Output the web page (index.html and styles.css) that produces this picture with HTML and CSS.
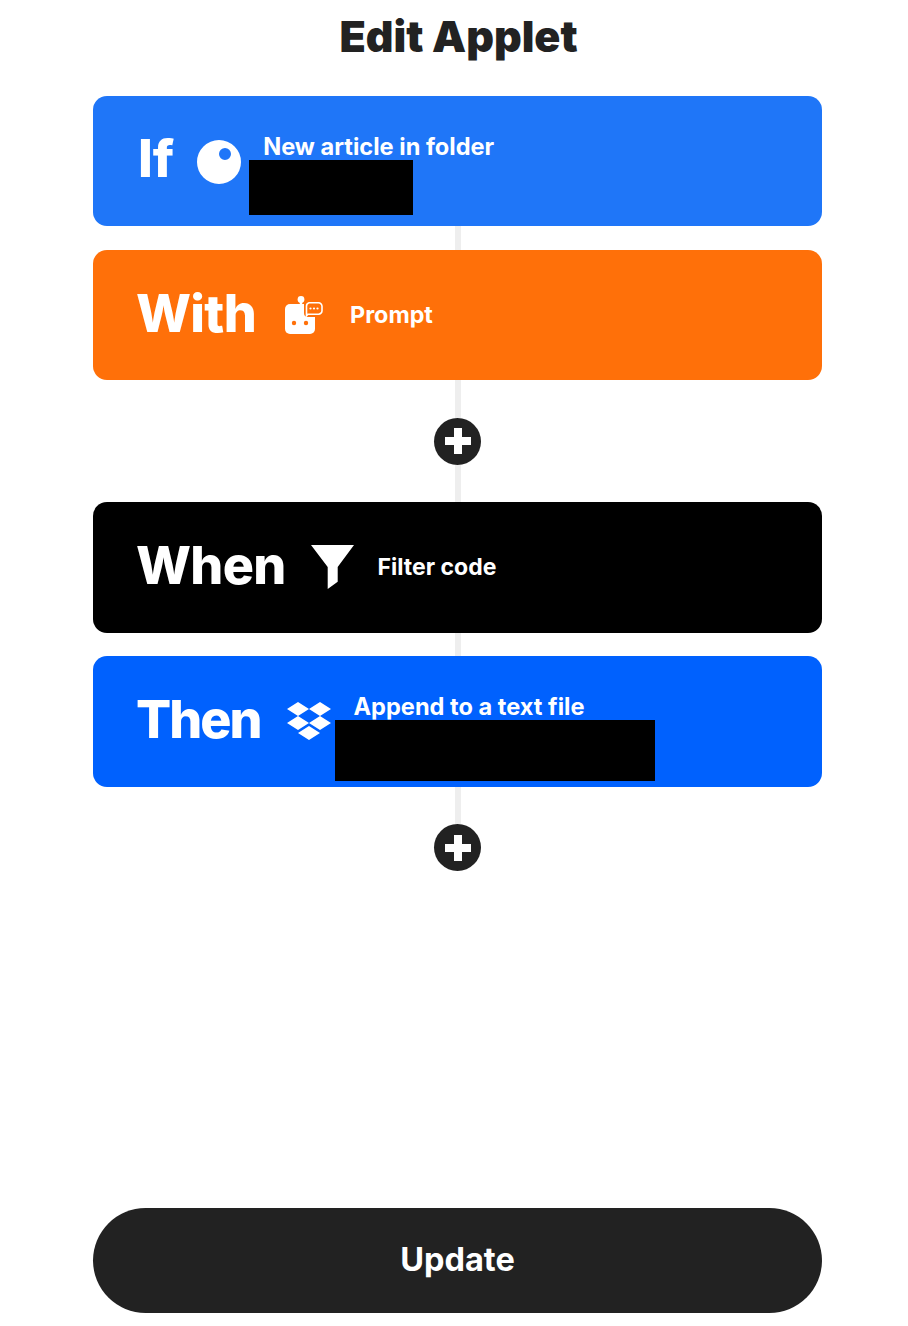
FILE: index.html
```html
<!DOCTYPE html>
<html lang="en">
<head>
    <meta charset="UTF-8">
    <meta name="viewport" content="width=device-width, initial-scale=1.0">
    <title>Edit Applet</title>
    <link rel="stylesheet" href="styles.css">
</head>
<body>
    <div class="page">
        <h1>Edit Applet</h1>

        <div class="flow">
            <div class="card card-if">
                <span class="word">If</span>
                <svg class="icon icon-feedly" viewBox="0 0 44 44">
                    <path fill="#fff" fill-rule="evenodd" d="M22 0a22 22 0 1 0 0 44a22 22 0 0 0 0-44zM28 8a6 6 0 1 1 0 12a6 6 0 0 1 0-12z"/>
                </svg>
                <span class="action">New article in folder</span>
                <div class="redact redact-folder"></div>
            </div>

            <div class="line line-short"></div>

            <div class="card card-with">
                <span class="word">With</span>
                <svg class="icon icon-bot" viewBox="0 0 38 38">
                    <circle cx="16" cy="3.4" r="3.4" fill="#fff"/>
                    <rect x="14.8" y="4" width="2.4" height="5" fill="#fff"/>
                    <rect x="0" y="8" width="30" height="30" rx="5" fill="#fff"/>
                    <circle cx="9" cy="27" r="2.2" fill="#ff7009"/>
                    <circle cx="21" cy="27" r="2.2" fill="#ff7009"/>
                    <rect x="19" y="4" width="19" height="17" rx="4" fill="#ff7009"/>
                    <path fill="none" stroke="#fff" stroke-width="1.6" d="M24 6.8h9.5a3.5 3.5 0 0 1 3.5 3.5v4.4a3.5 3.5 0 0 1-3.5 3.5h-10.5l-1.5 1.5v-9.4a3.5 3.5 0 0 1 2.5-3.5z"/>
                    <circle cx="25.5" cy="12.5" r="1.1" fill="#fff"/>
                    <circle cx="29" cy="12.5" r="1.1" fill="#fff"/>
                    <circle cx="32.5" cy="12.5" r="1.1" fill="#fff"/>
                </svg>
                <span class="action">Prompt</span>
            </div>

            <div class="line line-add"></div>
            <button class="add" type="button" aria-label="Add">
                <svg viewBox="0 0 26 26"><path fill="#fff" d="M9 0h8v9h9v8h-9v9h-8v-9h-9v-8h9z"/></svg>
            </button>
            <div class="line line-add"></div>

            <div class="card card-when">
                <span class="word">When</span>
                <svg class="icon icon-filter" viewBox="0 0 43 44">
                    <path fill="#fff" d="M0 0h43l-16.3 22v14.7l-10 7.3v-22z"/>
                </svg>
                <span class="action">Filter code</span>
            </div>

            <div class="line line-short"></div>

            <div class="card card-then">
                <span class="word">Then</span>
                <svg class="icon icon-dropbox" viewBox="0 0 44 38">
                    <path fill="#fff" d="M11 0l11 7l-11 7l-11-7zM33 0l11 7l-11 7l-11-7zM11 14l11 7l-11 7l-11-7zM33 14l11 7l-11 7l-11-7zM22 24l11 7l-11 7l-11-7z"/>
                </svg>
                <span class="action">Append to a text file</span>
                <div class="redact redact-file"></div>
            </div>

            <div class="line line-add"></div>
            <button class="add" type="button" aria-label="Add">
                <svg viewBox="0 0 26 26"><path fill="#fff" d="M9 0h8v9h9v8h-9v9h-8v-9h-9v-8h9z"/></svg>
            </button>
        </div>

        <button class="update" type="button">Update</button>
    </div>
</body>
</html>
```

FILE: styles.css
```css
body {
    margin: 0;
    background-color: #fff;
    font-family: "Inter", "Liberation Sans", sans-serif;
    color: #222;
}
.page {
    height: 1326px;
    padding: 0 86px 13px 93px;
    box-sizing: border-box;
    display: flex;
    flex-direction: column;
}
h1 {
    margin: 0;
    height: 95.5px;
    padding: 12px 0 0 2px;
    box-sizing: border-box;
    text-align: center;
    font-size: 43px;
    line-height: 48px;
    font-weight: 900;
    color: #222;
}
.flow {
    display: flex;
    flex-direction: column;
    align-items: center;
    flex: 1;
}
.card {
    position: relative;
    width: 100%;
    height: 130.5px;
    padding-left: 43px;
    box-sizing: border-box;
    border-radius: 14px;
    display: flex;
    align-items: center;
    color: #fff;
}
.card-if { background-color: #1f76f8; }
.card-with { background-color: #ff7009; }
.card-when { background-color: #000; }
.card-then { background-color: #0061fe; }
.word {
    margin-top: -2px;
    font-size: 52px;
    line-height: 60px;
    font-weight: 800;
    letter-spacing: -0.7px;
}
.card-if .word {
    margin: -3px 0 0 2px;
    letter-spacing: 0;
}
.card-then .word {
    letter-spacing: -2px;
}
.action {
    font-size: 23.6px;
    font-weight: 700;
}
.icon {
    flex: none;
}
.icon-feedly {
    width: 44px;
    height: 44px;
    margin: 3px 0 0 23px;
}
.card-if .action {
    align-self: flex-start;
    margin: 36px 0 0 22px;
}
.icon-bot {
    width: 38px;
    height: 38px;
    margin-left: 29px;
}
.card-with .action {
    margin-left: 27px;
    font-size: 23.3px;
}
.icon-filter {
    width: 43px;
    height: 44px;
    margin-left: 25px;
}
.card-when .action {
    margin-left: 24px;
    font-size: 23px;
}
.icon-dropbox {
    width: 44px;
    height: 38px;
    margin-left: 26px;
}
.card-then .action {
    align-self: flex-start;
    margin: 36px 0 0 23px;
}
.redact {
    position: absolute;
    background-color: #000;
}
.redact-folder {
    left: 156px;
    top: 64.5px;
    width: 164px;
    height: 55px;
}
.redact-file {
    left: 242px;
    top: 64px;
    width: 320px;
    height: 61px;
}
.line {
    width: 6px;
    background-color: #eee;
}
.line-short {
    height: 23.5px;
}
.line-add {
    height: 37.5px;
}
.add {
    width: 47px;
    height: 47px;
    padding: 0 0 0 1px;
    border: none;
    border-radius: 50%;
    background-color: #222;
    display: flex;
    align-items: center;
    justify-content: center;
}
.add svg {
    width: 26px;
    height: 26px;
}
.update {
    height: 105px;
    padding-bottom: 3px;
    border: none;
    border-radius: 53px;
    background-color: #222;
    color: #fff;
    font-family: inherit;
    font-size: 32.5px;
    font-weight: 700;
}
```
